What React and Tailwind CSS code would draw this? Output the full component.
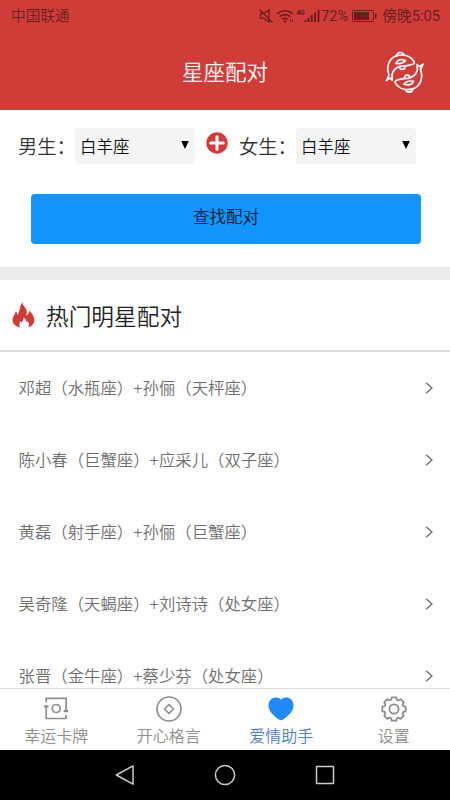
import { useState } from 'react'

const SIGNS = ['白羊座', '金牛座', '双子座', '巨蟹座', '狮子座', '处女座', '天秤座', '天蝎座', '射手座', '摩羯座', '水瓶座', '双鱼座']

const COUPLES = [
  '邓超（水瓶座）+孙俪（天枰座）',
  '陈小春（巨蟹座）+应采儿（双子座）',
  '黄磊（射手座）+孙俪（巨蟹座）',
  '吴奇隆（天蝎座）+刘诗诗（处女座）',
  '张晋（金牛座）+蔡少芬（处女座）',
]

const TABS = [
  { key: 'card', label: '幸运卡牌', Icon: CardIcon },
  { key: 'motto', label: '开心格言', Icon: CoinIcon },
  { key: 'love', label: '爱情助手', Icon: HeartIcon },
  { key: 'settings', label: '设置', Icon: GearIcon },
]

export default function App() {
  const [boy, setBoy] = useState(SIGNS[0])
  const [girl, setGirl] = useState(SIGNS[0])
  const [tab, setTab] = useState('love')

  return (
    <div className="w-[450px] h-[800px] flex flex-col overflow-hidden bg-white font-[350] font-[Roboto,'Noto_Sans_CJK_SC',sans-serif]">
      {/* Header */}
      <header className="h-[110px] shrink-0 flex flex-col bg-[#d03d38]">
        <StatusBar />
        <div className="flex-1 grid grid-cols-[1fr_auto_1fr] items-center">
          <h1 className="col-start-2 pt-1 text-[21.5px] leading-8 font-[350] text-white">星座配对</h1>
          <PiscesIcon />
        </div>
      </header>

      {/* Match form */}
      <section className="h-[157px] shrink-0 flex flex-col">
        <div className="flex items-center h-9 mt-[18px] pl-[18px]">
          <span className="w-[57px] pt-1 text-[19.3px] text-[#333] whitespace-nowrap">男生：</span>
          <SignSelect value={boy} onChange={setBoy} />
          <svg className="w-[22px] h-[22px] ml-[11px] mb-1.5 shrink-0" viewBox="0 0 22 22">
            <circle cx="11" cy="11" r="10.7" fill="#d03b3b" />
            <path d="M11 4.7v12.6M4.7 11h12.6" stroke="#fff" strokeWidth="3" strokeLinecap="round" />
          </svg>
          <span className="w-[57px] ml-[11px] pt-1 text-[19.3px] text-[#333] whitespace-nowrap">女生：</span>
          <SignSelect value={girl} onChange={setGirl} />
        </div>
        <button className="h-[50px] mt-[30px] ml-[31px] mr-[29px] pb-[2px] rounded-[4px] bg-[#1296fe] text-[16.5px] text-[#0a1420]">
          查找配对
        </button>
      </section>

      <div className="h-[13px] shrink-0 bg-[#ebebeb]" />

      {/* Popular couples */}
      <main className="flex-1 min-h-0 overflow-hidden">
        <div className="h-[72px] flex items-center border-b-2 border-[#dadada] pl-3">
          <FlameIcon />
          <h2 className="ml-[11px] pt-[7px] text-[22.7px] font-[350] text-[#222]">热门明星配对</h2>
        </div>
        <ul>
          {COUPLES.map(name => (
            <li key={name} className="h-[72px] flex items-center justify-between pl-[18.5px] pr-[17px]">
              <span className="pt-[3px] text-[16.4px] text-[#6e6e6e] whitespace-nowrap">{name}</span>
              <svg className="w-2 h-3" viewBox="0 0 8 12" fill="none" stroke="#707070" strokeWidth="1.5">
                <path d="M1 .7 7 6l-6 5.3" />
              </svg>
            </li>
          ))}
        </ul>
      </main>

      {/* Tab bar */}
      <nav className="h-[62px] shrink-0 grid grid-cols-4 border-t border-[#dcdcdc] bg-white">
        {TABS.map(({ key, label, Icon }) => (
          <button
            key={key}
            onClick={() => setTab(key)}
            className={`flex flex-col items-center pt-[7px] text-[16px] leading-[26px] ${tab === key ? 'text-[#5080c8]' : 'text-[#8e8e8e]'}`}
          >
            <Icon />
            <span className="mt-[2px]">{label}</span>
          </button>
        ))}
      </nav>

      {/* System keys */}
      <div className="h-[50px] shrink-0 flex items-center justify-center gap-[78px] bg-black">
        <svg className="w-[22px] h-[22px]" viewBox="0 0 22 22" fill="none" stroke="#ccc" strokeWidth="1.5" strokeLinejoin="round">
          <path d="M19 1.8v18.4L2.3 11z" />
        </svg>
        <svg className="w-[22px] h-[22px]" viewBox="0 0 22 22" fill="none" stroke="#ccc" strokeWidth="1.5">
          <circle cx="11" cy="11" r="9.6" />
        </svg>
        <svg className="w-[22px] h-[22px]" viewBox="0 0 22 22" fill="none" stroke="#ccc" strokeWidth="1.5">
          <rect x="2.5" y="2.5" width="17" height="17" rx=".5" />
        </svg>
      </div>
    </div>
  )
}

function StatusBar() {
  return (
    <div className="h-8 flex items-center justify-between pl-[11px] pr-[10px] text-[14.7px] text-[#6b1d1b]">
      <span className="pt-px">中国联通</span>
      <div className="flex items-center font-normal">
        <svg className="w-[62px] h-4 shrink-0" viewBox="0 0 62 16" fill="none" stroke="currentColor">
          {/* muted */}
          <path d="M1.5 5.5h3L10 2v12l-5.5-3.8h-3zM.5 1.5l13 13" strokeWidth="1.3" />
          {/* wifi */}
          <path d="M18 5.8q8-6.2 16 0M20.5 8.7q5.5-4.2 11 0M23 11.5q3-2.4 6 0" strokeWidth="1.6" />
          <circle cx="26" cy="13.5" r="1.2" fill="currentColor" stroke="none" />
          <path d="M31.5 11.5v2.5M33.5 11.5v2.5" strokeWidth="1" />
          {/* signal */}
          <path d="M46.5 14v-2M49.5 14v-4M52.7 14V7M56 14V4.5M59.5 14V1.5" strokeWidth="1.9" />
          <text x="37" y="6.5" fontSize="7.5" fontWeight="700" textLength="8.5" fill="currentColor" stroke="none">4G</text>
        </svg>
        <span className="pt-px">72%</span>
        <svg className="w-[25px] h-3 ml-[4px] mr-[5px]" viewBox="0 0 25 12">
          <rect x=".5" y=".5" width="21" height="11" rx="1" fill="none" stroke="currentColor" />
          <path d="M2 2h15v8H2zM23 3.5h1.5v5H23z" fill="currentColor" />
        </svg>
        <span className="pt-px">傍晚5:05</span>
      </div>
    </div>
  )
}

function SignSelect({ value, onChange }) {
  return (
    <label className="w-[120px] h-9 shrink-0 flex items-center justify-between pr-[6px] rounded-[4px] bg-[#f4f4f4] text-[16.5px] text-[#111]">
      <select
        value={value}
        onChange={e => onChange(e.target.value)}
        className="flex-1 h-full pl-[5px] pt-[4px] appearance-none bg-transparent outline-none"
      >
        {SIGNS.map(s => <option key={s} value={s}>{s}</option>)}
      </select>
      <svg className="w-2 h-2 mb-[3px]" viewBox="0 0 8 8"><path d="M.2 0h7.6L4 8z" fill="#000" /></svg>
    </label>
  )
}

function PiscesIcon() {
  return (
    <svg className="w-[46px] h-12 ml-auto mr-[22px] mt-px" viewBox="0 0 46 48" fill="none" stroke="#fff" strokeWidth="1.7" strokeLinecap="round" strokeLinejoin="round">
      <Fish />
      <g transform="rotate(180 22.7 24.3)">
        <Fish />
      </g>
    </svg>
  )
}

function Fish() {
  return (
    <>
      <path d="M4.3 32.5 7 27C4 20 6.5 10.5 14 8c7-2.3 14-.5 18 5.5.7 1 .4 2-.7 2.5-4 1.8-8.5 2-12 2.2-4.8.8-8 4-9.3 8.3l.2 5.5-2.5-2z" />
      <path d="M14.5 7.800c.5-4 6-4.500 7.500-.8M14 15.500c1.500-4 5-4.500 9.500-3-2 2.700-5 3.500-9.500 3z" />
      <path d="M17.5 18.8c.3 3.6 5.5 3.6 5.5-.5" />
    </>
  )
}

function FlameIcon() {
  return (
    <svg className="w-[23px] h-[26px] shrink-0" viewBox="0 0 23 26">
      <path d="M10.5.3c-.1 3.5 4.3 5.8 4.3 9.5 0 1.5-.4 2.8-.8 3.8 2-.8 3.1-2.5 3.3-5 2.800 3 5 6 5 9.500 0 3.700-2.200 6.200-5.800 7.300.9-2.600.4-4.800-.7-6.500l-.9 1.800c-.6-2.500-1.500-4.200-3.200-5.200.1 2.500-1.400 3.600-2.200 5.200l-1.100-1.700c-1.200 2-1.400 4-.5 6.400C3.300 24.300.5 21.800.5 18c0-3.200 2.400-5.300 3.300-8.800 1 1 1.500 2.200 1.600 3.700C8 10.500 7 5 10.500.3z" fill="#d03b38" />
    </svg>
  )
}

function CardIcon() {
  return (
    <svg className="w-[26px] h-[26px]" viewBox="0 0 26 26" fill="none" stroke="#8e8e8e" strokeWidth="1.7">
      <path d="M3.2 6.5V2.3h19.9v12.7M23.1 19v3.5H3.2V10.5" />
      <path d="M1 10.3h4.5M20.7 15.2h4.5" strokeWidth="2.2" />
      <circle cx="13.2" cy="12.5" r="4" />
    </svg>
  )
}

function CoinIcon() {
  return (
    <svg className="w-[26px] h-[26px]" viewBox="0 0 26 26" fill="none" stroke="#8e8e8e" strokeWidth="1.7" strokeLinejoin="round">
      <circle cx="13" cy="13" r="12" />
      <path d="m13 8.5 4.5 4.5-4.5 4.5L8.5 13z" />
    </svg>
  )
}

function HeartIcon() {
  return (
    <svg className="w-[26px] h-[26px]" viewBox="0 0 26 26">
      <path d="M13 3.8C16-.2 25.500.8 25.500 9.500c0 6-5.500 10.500-10.500 14q-2 1.400-4 0C6 20 .5 15.500.5 9.500.5.8 10-.2 13 3.800z" fill="#2189fb" />
    </svg>
  )
}

// eight teeth around a 26px box
const GEAR_POINTS = Array.from({ length: 8 }, (_, i) => i * 45).flatMap(deg =>
  [[-11, 11.9], [11, 11.9], [17, 9.7], [28, 9.7]].map(([off, r]) => {
    const a = (deg + off) * Math.PI / 180
    return `${(13 + r * Math.sin(a)).toFixed(2)},${(13 - r * Math.cos(a)).toFixed(2)}`
  })
).join(' ')

function GearIcon() {
  return (
    <svg className="w-[26px] h-[26px]" viewBox="0 0 26 26" fill="none" stroke="#8e8e8e" strokeWidth="1.8" strokeLinejoin="round">
      <polygon points={GEAR_POINTS} />
      <circle cx="13" cy="13" r="4.6" />
    </svg>
  )
}
